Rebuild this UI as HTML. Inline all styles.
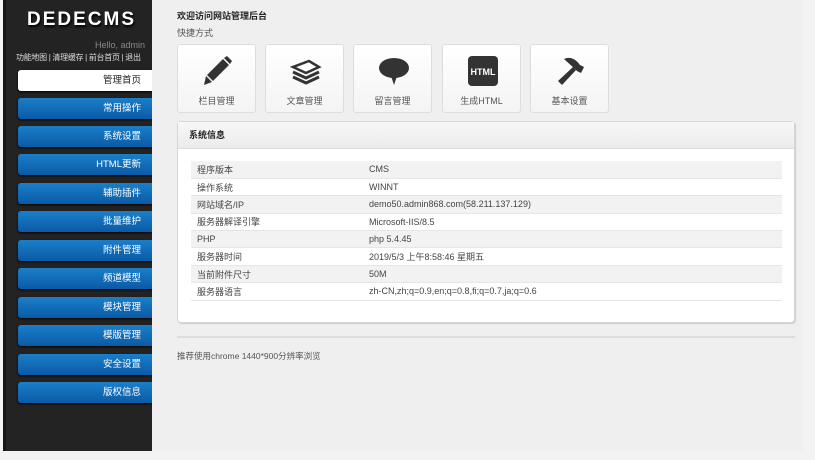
<!DOCTYPE html>
<html><head><meta charset="utf-8"><style>
*{margin:0;padding:0;box-sizing:border-box}
body{width:815px;height:460px;background:#f3f3f3;font-family:"Liberation Sans","Noto Sans CJK SC",sans-serif;font-size:9px;color:#444;position:relative;overflow:hidden}
#side{position:absolute;left:3px;top:0;width:149px;height:451px;background:#232323;border-left:3px solid #151515}
#logo{position:absolute;left:21px;top:9px;font-size:19px;font-weight:bold;color:#fff;letter-spacing:2px;text-shadow:1px 2px 2px #000}
#hello{position:absolute;right:7px;top:40px;color:#888;font-size:9px}
#links{position:absolute;left:10px;top:52px;color:#ddd;font-size:8px;white-space:nowrap;letter-spacing:-0.3px}
.btn{position:absolute;left:12px;width:134px;height:21px;border-radius:3px 0 0 3px;background:linear-gradient(#1a7fc9,#0b5aa6);color:#fff;text-align:right;padding-right:11px;line-height:21px;font-size:9.5px;box-shadow:0 1px 2px #000}
.btn.on{background:#fff;color:#222}
#main{position:absolute;left:152px;top:0;width:651px;height:451px;background:#efefef}
.t1{position:absolute;left:25px;top:9px;font-weight:bold;font-size:9px;color:#222}
.t2{position:absolute;left:25px;top:26px;font-size:9px;color:#555}
.ic{position:absolute;top:44px;width:79px;height:69px;background:linear-gradient(#fff,#f4f4f4);border:1px solid #ddd;border-radius:3px;text-align:center;font-size:9px;color:#555}
.ic svg{position:absolute;left:24px;top:10px}
.ic span{position:absolute;left:0;right:0;top:49px}
#panel{position:absolute;left:25px;top:121px;width:618px;height:202px;background:#fff;border:1px solid #d6d6d6;border-radius:4px;box-shadow:1px 1px 1px #ccc}
#ph{height:27px;background:linear-gradient(#f8f8f8,#ebebeb);border-bottom:1px solid #ddd;font-weight:bold;padding-left:11px;line-height:26px;color:#222}
table{position:absolute;left:13px;top:39px;width:591px;border-collapse:collapse}
td{height:17.4px;border-bottom:1px solid #e6e6e6;padding-left:6px;font-size:9px;color:#444}
tr:nth-child(odd) td{background:#f2f2f2}
#hr{position:absolute;left:25px;top:336px;width:618px;height:2px;background:#ddd}
#foot{position:absolute;left:25px;top:350px;font-size:8.5px;color:#555}
</style></head><body>
<div id="side">
<div id="logo">DEDECMS</div>
<div id="hello">Hello, admin</div>
<div id="links">功能地图 | 清理缓存 | 前台首页 | 退出</div>
<div class="btn on" style="top:70px">管理首页</div>
<div class="btn" style="top:98px">常用操作</div>
<div class="btn" style="top:126px">系统设置</div>
<div class="btn" style="top:154px">HTML更新</div>
<div class="btn" style="top:183px">辅助插件</div>
<div class="btn" style="top:211px">批量维护</div>
<div class="btn" style="top:240px">附件管理</div>
<div class="btn" style="top:268px">频道模型</div>
<div class="btn" style="top:297px">模块管理</div>
<div class="btn" style="top:325px">模版管理</div>
<div class="btn" style="top:354px">安全设置</div>
<div class="btn" style="top:382px">版权信息</div>
</div>
<div id="main">
<div class="t1">欢迎访问网站管理后台</div>
<div class="t2">快捷方式</div>
<div class="ic" style="left:25px"><svg width="32" height="32" viewBox="0 0 32 32"><path d="M22 3l3-2 5 5-2 3z" fill="#333"/><path d="M21 4l6 6L11 26l-6-6z" fill="#333"/><path d="M4 21l6 6-8 3z" fill="#333"/></svg><span>栏目管理</span></div>
<div class="ic" style="left:113px"><svg width="32" height="32" viewBox="0 0 32 32" fill="none" stroke="#333" stroke-width="3"><path d="M3 17l13 6 13-6"/><path d="M3 22l13 6 13-6"/><path d="M3 12l13 6 13-6-10-6z" fill="#fff" stroke-width="2.5"/></svg><span>文章管理</span></div>
<div class="ic" style="left:201px"><svg width="32" height="32" viewBox="0 0 32 32"><ellipse cx="16" cy="13" rx="15" ry="10" fill="#333"/><path d="M13 21l3 9 3-9z" fill="#333"/></svg><span>留言管理</span></div>
<div class="ic" style="left:290px"><svg width="32" height="32" viewBox="0 0 32 32"><rect x="1" y="1" width="30" height="30" rx="4" fill="#333"/><text x="16" y="20" font-size="9" font-weight="bold" fill="#fff" text-anchor="middle" font-family="Liberation Sans">HTML</text></svg><span>生成HTML</span></div>
<div class="ic" style="left:378px"><svg width="32" height="32" viewBox="0 0 32 32"><path d="M9 4c6-3 12 0 16 6l4 2-3 6-4-2-2-2z" fill="#333"/><path d="M18 12l3 3L7 30l-4-4z" fill="#333"/></svg><span>基本设置</span></div>
<div id="panel"><div id="ph">系统信息</div>
<table>
<tr><td style="width:172px">程序版本</td><td>CMS</td></tr>
<tr><td>操作系统</td><td>WINNT</td></tr>
<tr><td>网站域名/IP</td><td>demo50.admin868.com(58.211.137.129)</td></tr>
<tr><td>服务器解译引擎</td><td>Microsoft-IIS/8.5</td></tr>
<tr><td>PHP</td><td>php 5.4.45</td></tr>
<tr><td>服务器时间</td><td>2019/5/3 上午8:58:46 星期五</td></tr>
<tr><td>当前附件尺寸</td><td>50M</td></tr>
<tr><td>服务器语言</td><td>zh-CN,zh;q=0.9,en;q=0.8,fi;q=0.7,ja;q=0.6</td></tr>
</table></div>
<div id="hr"></div>
<div id="foot">推荐使用chrome 1440*900分辨率浏览</div>
</div>
</body></html>
